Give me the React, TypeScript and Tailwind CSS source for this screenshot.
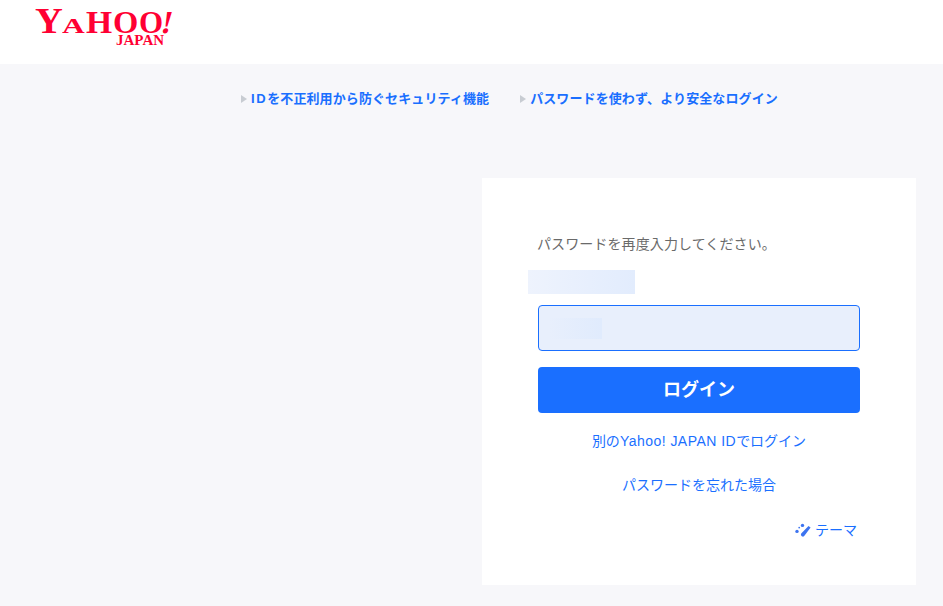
import React from 'react';

const FONT = '"Liberation Sans", "Noto Sans CJK JP", sans-serif';

const Logo = () => (
  <div className="ml-[35px] w-[140px] text-[#ff0033] font-bold leading-none" style={{ fontFamily: '"Liberation Serif", serif' }}>
    <div className="flex items-baseline h-[32px] whitespace-nowrap pt-[4px]">
      <span className="inline-block w-[27px] text-[35px] origin-left scale-x-[1.1]">Y</span>
      <span className="inline-block w-[24px] text-[21px] origin-left scale-x-[1.5]">A</span>
      <span className="inline-block w-[27px] text-[32px] origin-left scale-x-[1.05]">H</span>
      <span className="inline-block w-[26px] text-[31px] origin-left scale-x-[1.05]">O</span>
      <span className="inline-block w-[23px] text-[31px]">O</span>
      <span className="inline-block text-[32px] -skew-x-12">!</span>
    </div>
    <div className="text-[15px] ml-[81px] mt-[1px]">JAPAN</div>
  </div>
);

const TopLink = ({ label, prefix }: { label: string; prefix?: string }) => (
  <a className="flex items-center gap-[4px] text-[13px] font-bold text-[#1a6fff] tracking-[0.1px]">
    <span className="w-0 h-0 border-y-[4px] border-y-transparent border-l-[6px] border-l-[#c8ccd2]" />
    <span>
      {prefix && <span className="tracking-[1.6px]">{prefix}</span>}
      {label}
    </span>
  </a>
);

const Blur = ({ className }: { className: string }) => (
  <div className={`bg-gradient-to-r ${className}`} />
);

const App: React.FC = () => {
  return (
    <div className="min-h-[606px] bg-[#f7f7fa]" style={{ fontFamily: FONT }}>
      {/* Header */}
      <header className="h-[64px] bg-white">
        <Logo />
      </header>

      {/* Top links */}
      <nav className="flex h-[114px] pt-[25px] pl-[241px] gap-[31px] items-start">
        <TopLink prefix="ID" label="を不正利用から防ぐセキュリティ機能" />
        <TopLink label="パスワードを使わず、より安全なログイン" />
      </nav>

      {/* Login card */}
      <main className="ml-[482px] w-[434px] h-[407px] bg-white px-[56px] pt-[56px]">
        <p className="text-[14px] leading-[20px] text-[#6a6a6a] -ml-[1px] tracking-[0.1px]">パスワードを再度入力してください。</p>
        <Blur className="w-[107px] h-[24px] -ml-[10px] mt-[16px] from-[#eef3fd] to-[#e2ecfd]" />
        <div className="mt-[11px] h-[46px] rounded-[4px] border border-[#1a6fff] bg-[#e8effc] flex items-center pl-[10px]">
          <Blur className="w-[53px] h-[21px] from-[#e8effc] to-[#e0ebfd]" />
        </div>
        <button className="mt-[16px] w-full h-[46px] rounded-[4px] bg-[#1a6fff] text-white text-[18px] font-bold">ログイン</button>
        <div className="mt-[18px] text-center text-[14px] leading-[20px] text-[#1a6fff]">
          別の<span className="tracking-[0.47px]">Yahoo! JAPAN ID</span>でログイン
        </div>
        <div className="mt-[24px] text-center text-[14px] leading-[20px] text-[#1a6fff]">パスワードを忘れた場合</div>
        <div className="mt-[25px] flex justify-end items-center gap-[2px] pr-[3px] text-[14px] leading-[20px] text-[#1a6fff]">
          <svg width="18" height="15" viewBox="0 0 18 15" fill="#3d74f0">
            <path d="M13.5 3 15.6 4.6 9.6 12.6a2 2 0 0 1-3.4-2.2z" />
            <circle cx="7.5" cy="2.4" r="1.7" />
            <circle cx="2" cy="8.4" r="1.7" />
            <circle cx="4.2" cy="4.6" r="0.9" />
          </svg>
          テーマ
        </div>
      </main>
    </div>
  );
};

export default App;
